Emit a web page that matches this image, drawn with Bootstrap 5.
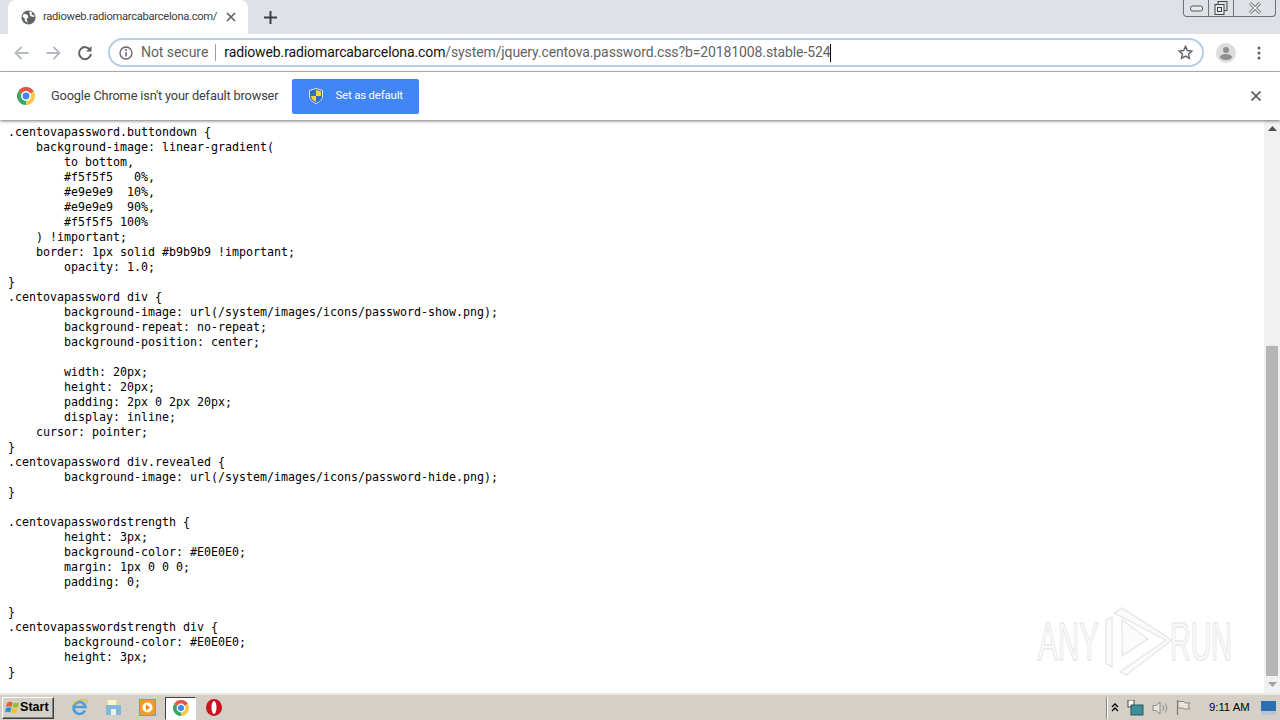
<!DOCTYPE html>
<html lang="en">
<head>
<meta charset="utf-8">
<title>radioweb.radiomarcabarcelona.com</title>
<link rel="stylesheet" href="https://cdn.jsdelivr.net/npm/bootstrap@5.3.0/dist/css/bootstrap.min.css">
<style>
html,body{height:100%;overflow:hidden}
body{font-family:Roboto,"Liberation Sans",sans-serif;background:#fff;color:#000}
.shell{width:1280px;height:720px}
.tabstrip{height:34px;background:#dee1e6;flex:none}
.tabitem{width:240px;height:34px;margin-left:8px;background:#fff;border-radius:8px 8px 0 0;padding-left:13px;padding-right:9px;gap:7px}
.tabtext{font-size:11.2px;letter-spacing:-.3px;color:#3c4043;width:176px;white-space:nowrap}
.newtab{margin-left:16px}
.winctl{height:17px;width:93px;margin-right:4px;border:1px solid #6d7178;border-top:0;border-radius:0 0 4px 4px;align-self:flex-start}
.winctl>div{width:25px;border-right:1px solid #6d7178;align-items:center;justify-content:center}
.winctl>div:last-child{border-right:0;flex:1}
.toolbar{height:38px;background:#fff;border-bottom:1px solid #b9babc;flex:none;padding-left:13px;padding-right:19px}
.navgap{gap:15px;width:95px}
.omnibox{width:1096px;height:29px;border:2px solid #b6cee8;border-radius:15px;padding-left:9px;padding-right:9px;white-space:nowrap}
.notsec{font-size:14px;color:#5f6368;margin-left:8px;letter-spacing:-.05px}
.omsep{width:1px;height:17px;background:#9aa0a6;margin:0 8px 0 7px}
.urltext{font-size:14px;letter-spacing:-.11px;color:#5f6368}
.urltext b{font-weight:400;color:#111}
.caretbar{width:1px;height:18px;background:#000}
.toolmenu{margin-left:21px}
.infobar{height:48px;background:#fff;flex:none;padding-left:17px;padding-right:19px;box-shadow:0 1px 3px rgba(0,0,0,.55);position:relative;z-index:2}
.infotext{font-size:12.8px;letter-spacing:-.17px;color:#3c4043;margin-left:16px;white-space:nowrap}
.defbtn{width:127px;height:35px;background:#4285f4;border-radius:2px;margin-left:14px;color:#fff;font-size:11.4px;letter-spacing:-.15px;padding-left:17px;gap:12px}
.content{min-height:0;position:relative}
.codepane{padding:5px 0 0 8px;font-family:"DejaVu Sans Mono","Liberation Mono",monospace;font-size:11.63px;line-height:15px;color:#000;margin:0;overflow:hidden;background:transparent;white-space:pre}
.vscroll{width:16px;background:#f1f1f1;flex:none}
.sarrow{height:17px;align-items:center;justify-content:center}
.strack{min-height:0;padding:0 2px}
.sspace{height:209px}
.sthumb{background:#b5b5b5}
.mark-wm{position:absolute;left:1036px;top:486px;pointer-events:none}
.wmtext{font-family:"Liberation Sans",sans-serif;font-size:53px;fill:#fbfbfb;stroke:#e9e9e9;stroke-width:1.5}
.taskbar{height:27px;background:#d4d0c8;border-top:2px solid #ece9e2;flex:none;position:relative;z-index:2}
.startbtn{width:52px;height:22px;margin-left:2px;border:1px solid;border-color:#fff #404040 #404040 #fff;background:#d4d0c8;font-family:"Liberation Sans",sans-serif;font-weight:700;font-size:12.6px;color:#000;gap:0;padding-left:2px;box-shadow:inset -1px -1px 0 #808080}
.quick{margin-left:17px;gap:17px}
.activeapp{width:31px;height:23px;margin-left:9px;background:#fff;border:1px solid;border-color:#404040 #fff #fff #404040;align-items:center;justify-content:center;margin-top:1px}
.operaslot{margin-left:10px}
.tray{height:22px;border-left:1px solid #8a877f;box-shadow:inset 1px 0 0 #fff;padding-left:4px;padding-right:4px;width:174px;gap:0}
.clock{font-family:"Liberation Sans",sans-serif;font-size:11.3px;color:#000;margin-left:18px;white-space:nowrap}
</style>
</head>
<body>
<div class="shell d-flex flex-column">
  <div class="tabstrip d-flex align-items-center">
    <div class="tabitem d-flex align-items-center">
      <svg width="15" height="15" viewBox="0 0 16 16"><circle cx="8" cy="8" r="7.500" fill="#5f6368"/><path d="M3 4l4 1 1 3-2 1 1 5-3-3v-2L1.500 7zM9 1.500l3 1-1 2 2 1 2 1-2 1-3-1-1-3z" fill="#fff"/></svg>
      <span class="tabtext">radioweb.radiomarcabarcelona.com/</span>
      <svg width="10" height="10" viewBox="0 0 10 10"><path d="M1 1l8 8M9 1l-8 8" stroke="#5f6368" stroke-width="1.700"/></svg>
    </div>
    <svg class="newtab" width="13" height="13" viewBox="0 0 13 13"><path d="M6.500 0v13M0 6.500h13" stroke="#3c4043" stroke-width="2"/></svg>
    <div class="winctl d-flex ms-auto">
      <div class="d-flex"><svg width="13" height="7" viewBox="0 0 13 7"><rect x=".5" y="1" width="12" height="5" rx="2" fill="#e8eaee" stroke="#555"/></svg></div>
      <div class="d-flex"><svg width="14" height="14" viewBox="0 0 14 14"><rect x="4" y=".5" width="9" height="9" fill="none" stroke="#444"/><rect x="1" y="3.500" width="9" height="10" fill="#e8eaee" stroke="#444"/><rect x="3.500" y="6.500" width="4" height="4" fill="none" stroke="#444"/></svg></div>
      <div class="d-flex"><svg width="14" height="12" viewBox="0 0 14 12"><path d="M2 1l10 10M12 1L2 11" stroke="#555" stroke-width="3"/><path d="M2 1l10 10M12 1L2 11" stroke="#f2f3f5" stroke-width="1.500"/></svg></div>
    </div>
  </div>
  <div class="toolbar d-flex align-items-center">
    <div class="navgap d-flex align-items-center">
      <svg width="17" height="16" viewBox="0 0 16 16"><path d="M15 8H2M8 2L2 8l6 6" fill="none" stroke="#b6b9bd" stroke-width="1.800"/></svg>
      <svg width="17" height="16" viewBox="0 0 16 16"><path d="M1 8h13M8 2l6 6-6 6" fill="none" stroke="#b6b9bd" stroke-width="1.800"/></svg>
      <svg width="16" height="16" viewBox="0 0 16 16"><path d="M13.200 5A6 6 0 1 0 14 9" fill="none" stroke="#5f6368" stroke-width="2"/><path d="M14.500 1v5.500H9z" fill="#5f6368"/></svg>
    </div>
    <div class="omnibox d-flex align-items-center">
      <svg width="14" height="14" viewBox="0 0 14 14"><circle cx="7" cy="7" r="6" fill="none" stroke="#5f6368" stroke-width="1.300"/><path d="M7 6v4.500" stroke="#5f6368" stroke-width="1.500"/><circle cx="7" cy="4" r="1" fill="#5f6368"/></svg>
      <span class="notsec">Not secure</span><span class="omsep"></span>
      <span class="urltext"><b>radioweb.radiomarcabarcelona.com</b>/system/jquery.centova.password.css?b=20181008.stable-524</span><span class="caretbar"></span>
      <svg class="ms-auto" width="15" height="15" viewBox="0 0 16 16"><path d="M8 1.500l2 4.400 4.800.5-3.600 3.200 1 4.700L8 11.900l-4.200 2.400 1-4.700L1.200 6.400 6 5.900z" fill="none" stroke="#5f6368" stroke-width="1.500"/></svg>
    </div>
    <svg class="ms-auto" width="20" height="20" viewBox="0 0 20 20"><circle cx="10" cy="10" r="10" fill="#dcdcdc"/><circle cx="10" cy="7" r="3" fill="#8e8e8e"/><ellipse cx="10" cy="14" rx="6" ry="3" fill="#8e8e8e"/></svg>
    <svg class="toolmenu" width="4" height="14" viewBox="0 0 4 14"><circle cx="2" cy="2" r="1.500" fill="#5f6368"/><circle cx="2" cy="7" r="1.500" fill="#5f6368"/><circle cx="2" cy="12" r="1.500" fill="#5f6368"/></svg>
  </div>
  <div class="infobar d-flex align-items-center">
    <svg width="18" height="18" viewBox="0 0 18 18"><path d="M9 9L1.200 4.500A9 9 0 0 1 16.800 4.500z" fill="#e0574a"/><path d="M9 9L16.800 4.500A9 9 0 0 1 9 18z" fill="#fbc94a"/><path d="M9 9L9 18A9 9 0 0 1 1.200 4.500z" fill="#3aa564"/><circle cx="9" cy="9" r="4.200" fill="#4285f4" stroke="#fff" stroke-width="1.500"/></svg>
    <span class="infotext">Google Chrome isn't your default browser</span>
    <div class="defbtn d-flex align-items-center">
      <svg width="14" height="16" viewBox="0 0 14 16"><path d="M7 .5l6.500 2v5.500c0 3.700-3 6-6.500 7.500C3.500 14 .5 11.700.5 8V2.500z" fill="#2f6fc0" stroke="#dbe7f7"/><path d="M7 2l5 1.500V8H7zM7 8v6C4.500 13 2 11 2 8z" fill="#f6d33c"/></svg>
      <span>Set as default</span>
    </div>
    <svg class="ms-auto" width="10" height="10" viewBox="0 0 10 10"><path d="M.5.500l9 9M9.500.500l-9 9" stroke="#5f6368" stroke-width="1.800"/></svg>
  </div>
  <div class="content d-flex flex-grow-1">
    <pre class="codepane flex-grow-1">.centovapassword.buttondown {
    background-image: linear-gradient(
        to bottom,
        #f5f5f5   0%,
        #e9e9e9  10%,
        #e9e9e9  90%,
        #f5f5f5 100%
    ) !important;
    border: 1px solid #b9b9b9 !important;
        opacity: 1.0;
}
.centovapassword div {
        background-image: url(/system/images/icons/password-show.png);
        background-repeat: no-repeat;
        background-position: center;

        width: 20px;
        height: 20px;
        padding: 2px 0 2px 20px;
        display: inline;
    cursor: pointer;
}
.centovapassword div.revealed {
        background-image: url(/system/images/icons/password-hide.png);
}

.centovapasswordstrength {
        height: 3px;
        background-color: #E0E0E0;
        margin: 1px 0 0 0;
        padding: 0;

}
.centovapasswordstrength div {
        background-color: #E0E0E0;
        height: 3px;
}</pre>
    <div class="vscroll d-flex flex-column">
      <div class="sarrow d-flex"><svg width="9" height="5" viewBox="0 0 9 5"><path d="M4.500 0L9 5H0z" fill="#505050"/></svg></div>
      <div class="strack d-flex flex-column flex-grow-1"><div class="sspace"></div><div class="sthumb flex-grow-1"></div></div>
      <div class="sarrow d-flex"><svg width="9" height="5" viewBox="0 0 9 5"><path d="M4.500 5L9 0H0z" fill="#a3a3a3"/></svg></div>
    </div>
    <svg class="mark-wm" width="215" height="72" viewBox="0 0 215 72">
      <text class="wmtext" transform="translate(2 54) scale(.56 1)">ANY</text>
      <path d="M70 14v44l6 3V11zM86 2l-8 5 52 27-46 32 6 3 46-35zM86 14v36l26-17z" fill="#fbfbfb" stroke="#e9e9e9" stroke-width="1.500"/>
      <text class="wmtext" transform="translate(134 54) scale(.54 1)">RUN</text>
    </svg>
  </div>
  <div class="taskbar d-flex align-items-center">
    <div class="startbtn d-flex align-items-center">
      <svg width="15" height="15" viewBox="0 0 15 15"><path d="M2 3c2-1.500 4-1.500 5.500-.5l-1 4.500C5 6 3 6 1 7z" fill="#e2612a"/><path d="M8.500 2.500c2 1 3.500 1 5.500 0l-1 4.500c-2 1-3.500 1-5.500 0z" fill="#8cbf3f"/><path d="M1 8c2-1 4-1 5.300 0l-1 4.500C4 11.500 2 11.500 0 12.500z" fill="#2a8fdc"/><path d="M7.300 8c2 1 3.500 1 5.500 0l-1 4.500c-2 1-3.500 1-5.500 0z" fill="#f5c02c"/></svg>
      <span>Start</span>
    </div>
    <div class="quick d-flex align-items-center">
      <svg width="17" height="17" viewBox="0 0 17 17"><path d="M14 11.500A6 6 0 1 1 14.500 8H3.500" fill="none" stroke="#4a9fdc" stroke-width="2.600"/><path d="M2 6C4 2 11-.5 15.500 1c1 1 .5 3-.5 4.500" fill="none" stroke="#e6b93a" stroke-width="1.300"/></svg>
      <svg width="17" height="17" viewBox="0 0 17 17"><rect x="1" y="2" width="12" height="5" fill="#f0d98a"/><rect x="3" y="1" width="8" height="6" fill="#fff4c7"/><rect x="1" y="6" width="15" height="10" fill="#7fb8d8"/><rect x="6" y="10" width="5" height="6" fill="#e8f1f5"/></svg>
      <svg width="17" height="17" viewBox="0 0 17 17"><rect x=".5" y=".5" width="16" height="16" fill="#f39a2d" stroke="#6b9ed0"/><circle cx="8.500" cy="8.500" r="5" fill="#fff"/><path d="M7 5.500l4 3-4 3z" fill="#f07e12"/></svg>
    </div>
    <div class="activeapp d-flex"><svg width="16" height="16" viewBox="0 0 18 18"><path d="M9 9L1.200 4.500A9 9 0 0 1 16.800 4.500z" fill="#e0574a"/><path d="M9 9L16.800 4.500A9 9 0 0 1 9 18z" fill="#fbc94a"/><path d="M9 9L9 18A9 9 0 0 1 1.200 4.500z" fill="#3aa564"/><circle cx="9" cy="9" r="4.200" fill="#4285f4" stroke="#fff" stroke-width="1.500"/></svg></div>
    <svg class="operaslot" width="16" height="17" viewBox="0 0 16 17"><ellipse cx="8" cy="8.500" rx="8" ry="8.500" fill="#c8141e"/><ellipse cx="8" cy="8.500" rx="2.500" ry="6.500" fill="#fff"/></svg>
    <div class="tray d-flex align-items-center ms-auto">
      <svg width="8" height="9" viewBox="0 0 8 9"><path d="M1 4l3-3 3 3M1 8l3-3 3 3" fill="none" stroke="#000" stroke-width="1.300"/></svg>
      <svg class="ms-2" width="17" height="16" viewBox="0 0 17 16"><rect x="1" y="0" width="6" height="7" fill="#fff" stroke="#444"/><rect x="4" y="5" width="12" height="10" fill="#3d8f9a" stroke="#355"/></svg>
      <svg class="ms-2" width="16" height="14" viewBox="0 0 16 14"><path d="M1 4.500h3L8 1v12L4 9.500H1z" fill="#e8e6e0" stroke="#8d8b85"/><path d="M10.500 4c1.500 2 1.500 4 0 6M13 2.500c2.200 3 2.200 6 0 9" fill="none" stroke="#8d8b85"/></svg>
      <svg class="ms-2" width="15" height="15" viewBox="0 0 15 15"><path d="M1.500 0v15" stroke="#7c7a74" stroke-width="1.200"/><path d="M2 1.500h6l1 1.500h5l-2 3 2 3H8L7 8H2z" fill="#e8e6e0" stroke="#8d8b85"/></svg>
      <span class="clock">9:11 AM</span>
      <svg class="ms-auto" width="15" height="14" viewBox="0 0 15 14"><rect width="15" height="14" fill="#2a6fb0"/><rect y="10" width="15" height="4" fill="#b9c6d1"/></svg>
    </div>
  </div>
</div>
</body>
</html>
